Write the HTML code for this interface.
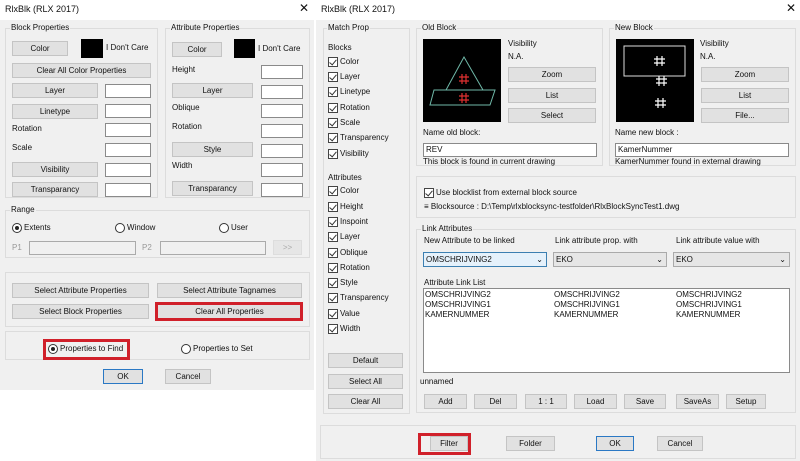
<!DOCTYPE html>
<html><head><meta charset="utf-8">
<style>
*{box-sizing:border-box;margin:0;padding:0}
body{width:800px;height:461px;background:#fff;position:relative;overflow:hidden;font-family:"Liberation Sans",sans-serif;font-size:8px;color:#111}
div,span{position:absolute}
.w{background:#f0f0f0}
.g{border:1px solid #dcdcdc}
.gl{background:#f0f0f0;padding:0 1px;white-space:nowrap}
.l{white-space:nowrap;line-height:10px}
.b{background:#e1e1e1;border:1px solid #c4c4c4;text-align:center;line-height:13px;white-space:nowrap}
.t{background:#fff;border:1px solid #8a8a8a}
.blk{background:#000}
.cb{width:10px;height:10px;border:1px solid #444;background:#fff}
.cb:after{content:"";position:absolute;left:2px;top:0px;width:3px;height:6px;border:solid #333;border-width:0 1px 1px 0;transform:rotate(40deg)}
.rd{width:10px;height:10px;border:1px solid #333;border-radius:50%;background:#fff}
.rd.on:after{content:"";position:absolute;left:2px;top:2px;width:4px;height:4px;border-radius:50%;background:#222}
.red{border:3px solid #d0202a}
.ok{border:1px solid #2a78c4}
</style></head><body>

<!-- LEFT WINDOW -->
<span class="l" style="left:5px;top:4px;font-size:9px">RlxBlk (RLX 2017)</span>
<span class="l" style="left:299px;top:3px;font-size:12px">✕</span>
<div class="w" style="left:0;top:20px;width:314px;height:370px"></div>

<div class="g" style="left:5px;top:28px;width:153px;height:170px"></div>
<span class="l gl" style="left:10px;top:23px">Block Properties</span>
<div class="b" style="left:12px;top:41px;width:56px;height:15px">Color</div>
<div class="blk" style="left:81px;top:39px;width:22px;height:19px"></div>
<span class="l" style="left:106px;top:43px">I Don't Care</span>
<div class="b" style="left:12px;top:63px;width:139px;height:15px">Clear All Color Properties</div>
<div class="b" style="left:12px;top:83px;width:86px;height:15px">Layer</div>
<div class="t" style="left:105px;top:84px;width:46px;height:14px"></div>
<div class="b" style="left:12px;top:104px;width:86px;height:15px">Linetype</div>
<div class="t" style="left:105px;top:104px;width:46px;height:14px"></div>
<span class="l" style="left:12px;top:124px">Rotation</span>
<div class="t" style="left:105px;top:123px;width:46px;height:14px"></div>
<span class="l" style="left:12px;top:143px">Scale</span>
<div class="t" style="left:105px;top:143px;width:46px;height:14px"></div>
<div class="b" style="left:12px;top:162px;width:86px;height:15px">Visibility</div>
<div class="t" style="left:105px;top:163px;width:46px;height:14px"></div>
<div class="b" style="left:12px;top:182px;width:86px;height:15px">Transparancy</div>
<div class="t" style="left:105px;top:183px;width:46px;height:14px"></div>

<div class="g" style="left:165px;top:28px;width:145px;height:170px"></div>
<span class="l gl" style="left:170px;top:23px">Attribute Properties</span>
<div class="b" style="left:172px;top:42px;width:50px;height:15px">Color</div>
<div class="blk" style="left:234px;top:39px;width:21px;height:19px"></div>
<span class="l" style="left:258px;top:44px">I Don't Care</span>
<span class="l" style="left:172px;top:65px">Height</span>
<div class="t" style="left:261px;top:65px;width:42px;height:14px"></div>
<div class="b" style="left:172px;top:83px;width:81px;height:15px">Layer</div>
<div class="t" style="left:261px;top:85px;width:42px;height:14px"></div>
<span class="l" style="left:172px;top:103px">Oblique</span>
<div class="t" style="left:261px;top:104px;width:42px;height:14px"></div>
<span class="l" style="left:172px;top:122px">Rotation</span>
<div class="t" style="left:261px;top:124px;width:42px;height:14px"></div>
<div class="b" style="left:172px;top:142px;width:81px;height:15px">Style</div>
<div class="t" style="left:261px;top:144px;width:42px;height:14px"></div>
<span class="l" style="left:172px;top:161px">Width</span>
<div class="t" style="left:261px;top:163px;width:42px;height:14px"></div>
<div class="b" style="left:172px;top:181px;width:81px;height:15px">Transparancy</div>
<div class="t" style="left:261px;top:183px;width:42px;height:14px"></div>

<div class="g" style="left:5px;top:210px;width:305px;height:48px"></div>
<span class="l gl" style="left:10px;top:205px">Range</span>
<div class="rd on" style="left:12px;top:223px"></div><span class="l" style="left:24px;top:223px">Extents</span>
<div class="rd" style="left:115px;top:223px"></div><span class="l" style="left:127px;top:223px">Window</span>
<div class="rd" style="left:219px;top:223px"></div><span class="l" style="left:231px;top:223px">User</span>
<span class="l" style="left:12px;top:243px;color:#999">P1</span>
<div class="t" style="left:29px;top:241px;width:107px;height:14px;background:#f0f0f0;border-color:#aaa"></div>
<span class="l" style="left:142px;top:243px;color:#999">P2</span>
<div class="t" style="left:160px;top:241px;width:106px;height:14px;background:#f0f0f0;border-color:#aaa"></div>
<div class="b" style="left:273px;top:240px;width:29px;height:15px;color:#aaa;border-color:#ddd;background:#e6e6e6">&gt;&gt;</div>

<div class="g" style="left:5px;top:272px;width:305px;height:55px"></div>
<div class="b" style="left:12px;top:283px;width:137px;height:15px">Select Attribute Properties</div>
<div class="b" style="left:157px;top:283px;width:145px;height:15px">Select Attribute Tagnames</div>
<div class="b" style="left:12px;top:304px;width:137px;height:15px">Select Block Properties</div>
<div class="b" style="left:157px;top:304px;width:145px;height:15px">Clear All Properties</div>
<div class="red" style="left:155px;top:302px;width:148px;height:19px"></div>

<div class="g" style="left:5px;top:331px;width:305px;height:29px"></div>
<div class="rd on" style="left:48px;top:344px"></div><span class="l" style="left:60px;top:344px">Properties to Find</span>
<div class="red" style="left:43px;top:339px;width:87px;height:21px"></div>
<div class="rd" style="left:181px;top:344px"></div><span class="l" style="left:193px;top:344px">Properties to Set</span>
<div class="b ok" style="left:103px;top:369px;width:40px;height:15px">OK</div>
<div class="b" style="left:165px;top:369px;width:46px;height:15px">Cancel</div>

<!-- RIGHT WINDOW -->
<span class="l" style="left:321px;top:4px;font-size:9px">RlxBlk (RLX 2017)</span>
<span class="l" style="left:786px;top:3px;font-size:12px">✕</span>
<div class="w" style="left:316px;top:20px;width:484px;height:441px"></div>

<div class="g" style="left:323px;top:28px;width:87px;height:386px"></div>
<span class="l gl" style="left:327px;top:23px">Match Prop</span>
<span class="l" style="left:328px;top:43px">Blocks</span>
<div class="cb" style="left:328px;top:57px"></div><span class="l" style="left:340px;top:57px">Color</span>
<div class="cb" style="left:328px;top:72px"></div><span class="l" style="left:340px;top:72px">Layer</span>
<div class="cb" style="left:328px;top:87px"></div><span class="l" style="left:340px;top:87px">Linetype</span>
<div class="cb" style="left:328px;top:103px"></div><span class="l" style="left:340px;top:103px">Rotation</span>
<div class="cb" style="left:328px;top:118px"></div><span class="l" style="left:340px;top:118px">Scale</span>
<div class="cb" style="left:328px;top:133px"></div><span class="l" style="left:340px;top:133px">Transparency</span>
<div class="cb" style="left:328px;top:149px"></div><span class="l" style="left:340px;top:149px">Visibility</span>
<span class="l" style="left:328px;top:173px">Attributes</span>
<div class="cb" style="left:328px;top:186px"></div><span class="l" style="left:340px;top:186px">Color</span>
<div class="cb" style="left:328px;top:202px"></div><span class="l" style="left:340px;top:202px">Height</span>
<div class="cb" style="left:328px;top:217px"></div><span class="l" style="left:340px;top:217px">Inspoint</span>
<div class="cb" style="left:328px;top:232px"></div><span class="l" style="left:340px;top:232px">Layer</span>
<div class="cb" style="left:328px;top:248px"></div><span class="l" style="left:340px;top:248px">Oblique</span>
<div class="cb" style="left:328px;top:263px"></div><span class="l" style="left:340px;top:263px">Rotation</span>
<div class="cb" style="left:328px;top:278px"></div><span class="l" style="left:340px;top:278px">Style</span>
<div class="cb" style="left:328px;top:293px"></div><span class="l" style="left:340px;top:293px">Transparency</span>
<div class="cb" style="left:328px;top:309px"></div><span class="l" style="left:340px;top:309px">Value</span>
<div class="cb" style="left:328px;top:324px"></div><span class="l" style="left:340px;top:324px">Width</span>
<div class="b" style="left:328px;top:353px;width:75px;height:15px">Default</div>
<div class="b" style="left:328px;top:374px;width:75px;height:15px">Select All</div>
<div class="b" style="left:328px;top:394px;width:75px;height:15px">Clear All</div>

<div class="g" style="left:416px;top:28px;width:187px;height:138px"></div>
<span class="l gl" style="left:421px;top:23px">Old Block</span>
<svg style="position:absolute;left:423px;top:39px" width="78" height="83">
<rect width="78" height="83" fill="#000"/>
<g fill="none" stroke="#6fb8a8" stroke-width="1"><path d="M41 18 L23 51 L60 51 Z"/><path d="M11 51 L72 51 L67 66 L7 66 Z"/></g>
<g stroke="#e03030" stroke-width="1.2"><path d="M39 35v10M43 35v10M36 38h10M36 42h10"/><path d="M39 54v10M43 54v10M36 57h10M36 61h10"/></g>
</svg>
<span class="l" style="left:508px;top:39px">Visibility</span>
<span class="l" style="left:508px;top:52px">N.A.</span>
<div class="b" style="left:508px;top:67px;width:88px;height:15px">Zoom</div>
<div class="b" style="left:508px;top:88px;width:88px;height:15px">List</div>
<div class="b" style="left:508px;top:108px;width:88px;height:15px">Select</div>
<span class="l" style="left:423px;top:128px">Name old block:</span>
<div class="t" style="left:423px;top:143px;width:174px;height:14px"><span class="l" style="left:2px;top:1px">REV</span></div>
<span class="l" style="left:423px;top:157px">This block is found in current drawing</span>

<div class="g" style="left:609px;top:28px;width:187px;height:138px"></div>
<span class="l gl" style="left:614px;top:23px">New Block</span>
<svg style="position:absolute;left:616px;top:39px" width="78" height="83">
<rect width="78" height="83" fill="#000"/>
<rect x="8" y="7" width="61" height="30" fill="none" stroke="#ddd"/>
<g stroke="#fff" stroke-width="1.2"><path d="M41 17v10M46 17v10M38 20h11M38 24h11"/><path d="M43 37v10M48 37v10M40 40h11M40 44h11"/><path d="M42 59v10M47 59v10M39 62h11M39 66h11"/></g>
</svg>
<span class="l" style="left:700px;top:39px">Visibility</span>
<span class="l" style="left:700px;top:52px">N.A.</span>
<div class="b" style="left:701px;top:67px;width:88px;height:15px">Zoom</div>
<div class="b" style="left:701px;top:88px;width:88px;height:15px">List</div>
<div class="b" style="left:701px;top:108px;width:88px;height:15px">File...</div>
<span class="l" style="left:615px;top:128px">Name new block :</span>
<div class="t" style="left:615px;top:143px;width:174px;height:14px"><span class="l" style="left:2px;top:1px">KamerNummer</span></div>
<span class="l" style="left:615px;top:157px">KamerNummer found in external drawing</span>

<div class="g" style="left:416px;top:176px;width:380px;height:42px"></div>
<div class="cb" style="left:424px;top:188px"></div><span class="l" style="left:436px;top:188px">Use blocklist from external block source</span>
<span class="l" style="left:424px;top:202px">≡ Blocksource : D:\Temp\rlxblocksync-testfolder\RlxBlockSyncTest1.dwg</span>

<div class="g" style="left:416px;top:229px;width:380px;height:184px"></div>
<span class="l gl" style="left:421px;top:224px">Link Attributes</span>
<span class="l" style="left:424px;top:236px">New Attribute to be linked</span>
<span class="l" style="left:555px;top:236px">Link attribute prop. with</span>
<span class="l" style="left:676px;top:236px">Link attribute value with</span>
<div class="t" style="left:423px;top:252px;width:124px;height:15px;background:#e5f1fb;border-color:#3c7fb1"><span class="l" style="left:2px;top:2px">OMSCHRIJVING2</span><span class="l" style="right:3px;top:2px">⌄</span></div>
<div class="t" style="left:553px;top:252px;width:114px;height:15px;background:#e6e6e6;border-color:#aaa"><span class="l" style="left:2px;top:2px">EKO</span><span class="l" style="right:3px;top:2px">⌄</span></div>
<div class="t" style="left:673px;top:252px;width:117px;height:15px;background:#e6e6e6;border-color:#aaa"><span class="l" style="left:2px;top:2px">EKO</span><span class="l" style="right:3px;top:2px">⌄</span></div>
<span class="l" style="left:424px;top:278px">Attribute Link List</span>
<div class="t" style="left:423px;top:288px;width:367px;height:85px"></div>
<span class="l" style="left:425px;top:290px;line-height:10px">OMSCHRIJVING2<br>OMSCHRIJVING1<br>KAMERNUMMER</span>
<span class="l" style="left:554px;top:290px;line-height:10px">OMSCHRIJVING2<br>OMSCHRIJVING1<br>KAMERNUMMER</span>
<span class="l" style="left:676px;top:290px;line-height:10px">OMSCHRIJVING2<br>OMSCHRIJVING1<br>KAMERNUMMER</span>
<span class="l" style="left:420px;top:377px">unnamed</span>
<div class="b" style="left:424px;top:394px;width:43px;height:15px">Add</div>
<div class="b" style="left:474px;top:394px;width:43px;height:15px">Del</div>
<div class="b" style="left:525px;top:394px;width:42px;height:15px">1 : 1</div>
<div class="b" style="left:574px;top:394px;width:43px;height:15px">Load</div>
<div class="b" style="left:624px;top:394px;width:42px;height:15px">Save</div>
<div class="b" style="left:676px;top:394px;width:43px;height:15px">SaveAs</div>
<div class="b" style="left:726px;top:394px;width:40px;height:15px">Setup</div>

<div class="g" style="left:320px;top:425px;width:476px;height:34px"></div>
<div class="b" style="left:430px;top:436px;width:38px;height:15px">Filter</div>
<div class="red" style="left:418px;top:433px;width:53px;height:22px"></div>
<div class="b" style="left:506px;top:436px;width:49px;height:15px">Folder</div>
<div class="b ok" style="left:596px;top:436px;width:38px;height:15px">OK</div>
<div class="b" style="left:657px;top:436px;width:46px;height:15px">Cancel</div>
</body></html>
